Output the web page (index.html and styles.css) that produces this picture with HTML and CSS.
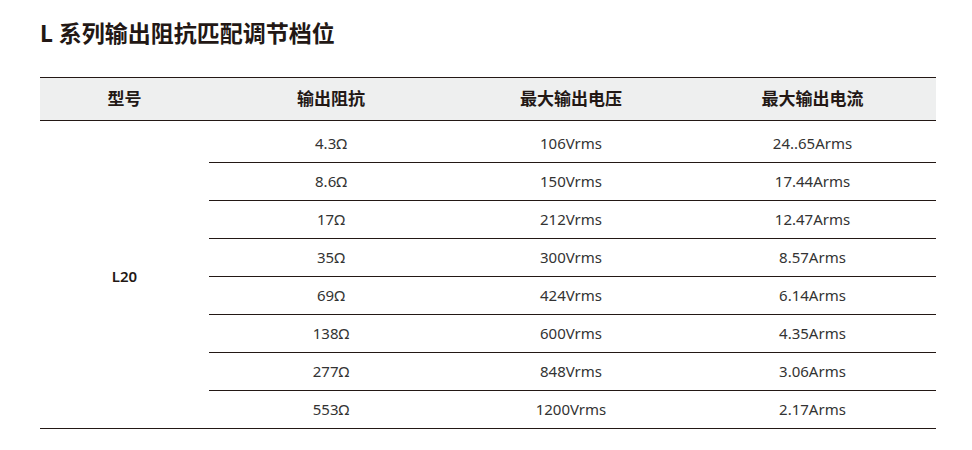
FILE: index.html
```html
<!DOCTYPE html>
<html lang="zh-CN">
<head>
<meta charset="utf-8">
<title>L 系列输出阻抗匹配调节档位</title>
<link rel="stylesheet" href="styles.css">
</head>
<body>
<div class="page">
  <h1 class="title">L 系列输出阻抗匹配调节档位</h1>
  <table class="spec">
    <colgroup>
      <col class="c1"><col class="c2"><col class="c3"><col class="c4">
    </colgroup>
    <thead>
      <tr><th>型号</th><th>输出阻抗</th><th>最大输出电压</th><th>最大输出电流</th></tr>
    </thead>
    <tbody>
      <tr class="first"><td class="model" rowspan="8">L20</td><td>4.3Ω</td><td>106Vrms</td><td>24..65Arms</td></tr>
      <tr><td>8.6Ω</td><td>150Vrms</td><td>17.44Arms</td></tr>
      <tr><td>17Ω</td><td>212Vrms</td><td>12.47Arms</td></tr>
      <tr><td>35Ω</td><td>300Vrms</td><td>8.57Arms</td></tr>
      <tr><td>69Ω</td><td>424Vrms</td><td>6.14Arms</td></tr>
      <tr><td>138Ω</td><td>600Vrms</td><td>4.35Arms</td></tr>
      <tr><td>277Ω</td><td>848Vrms</td><td>3.06Arms</td></tr>
      <tr><td>553Ω</td><td>1200Vrms</td><td>2.17Arms</td></tr>
    </tbody>
  </table>
</div>
</body>
</html>
```

FILE: styles.css
```css
html, body {
  margin: 0;
  padding: 0;
  background: #ffffff;
}
body {
  font-family: "Noto Sans", "Noto Sans CJK SC", sans-serif;
  color: #333333;
}
.page {
  padding: 18px 0 0 40px;
}
.title {
  margin: 0;
  font-size: 23px;
  line-height: 30px;
  font-weight: 700;
  color: #231815;
}
.spec {
  margin-top: 29px;
  width: 896px;
  table-layout: fixed;
  border-collapse: separate;
  border-spacing: 0;
  border-top: 1px solid #231815;
}
.c1 { width: 169px; }
.c2 { width: 244px; }
.c3 { width: 236px; }
.c4 { width: 247px; }
.spec th {
  padding: 0;
  line-height: 42px;
  background: #eeefef;
  font-size: 17px;
  font-weight: 700;
  color: #231815;
  text-align: center;
  border-bottom: 1px solid #231815;
}
.spec td {
  padding: 0;
  line-height: 37px;
  font-size: 15px;
  text-align: center;
  border-bottom: 1px solid #231815;
}
.spec .first td {
  padding-top: 4px;
}
.spec .first td.model {
  padding-top: 4px;
  vertical-align: middle;
  font-weight: 600;
  color: #231815;
}
```
